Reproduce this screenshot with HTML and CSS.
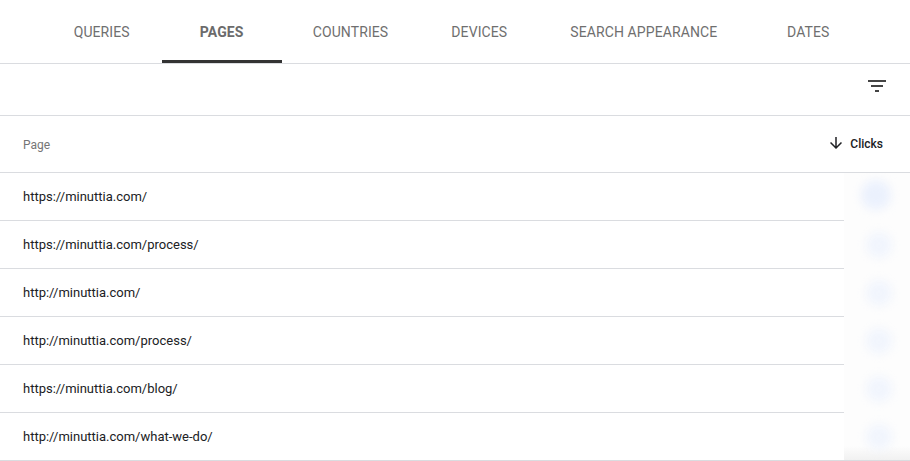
FILE: index.html
```html
<!DOCTYPE html>
<html>
<head>
<meta charset="utf-8">
<link rel="stylesheet" href="styles.css">
</head>
<body>
<div class="tabs">
  <div class="tab">QUERIES</div>
  <div class="tab active">PAGES</div>
  <div class="tab">COUNTRIES</div>
  <div class="tab">DEVICES</div>
  <div class="tab">SEARCH APPEARANCE</div>
  <div class="tab">DATES</div>
</div>
<div class="toolbar">
  <svg class="filter" width="24" height="24" viewBox="0 0 24 24"><path d="M10 18h4v-2h-4v2zM3 6v2h18V6H3zm3 7h12v-2H6v2z" fill="#444"/></svg>
</div>
<div class="table">
  <div class="head">
    <div class="hcell">Page</div>
    <div class="hclicks">
      <svg width="18" height="18" viewBox="0 0 24 24"><path d="M20 12l-1.41-1.41L13 16.17V4h-2v12.17l-5.58-5.59L4 12l8 8 8-8z" fill="#202124"/></svg>
      <span>Clicks</span>
    </div>
  </div>
  <div class="row"><div class="url">https://minuttia.com/</div><div class="clicks"><span class="dot d1"></span></div></div>
  <div class="row"><div class="url">https://minuttia.com/process/</div><div class="clicks"><span class="dot"></span></div></div>
  <div class="row"><div class="url">http://minuttia.com/</div><div class="clicks"><span class="dot"></span></div></div>
  <div class="row"><div class="url">http://minuttia.com/process/</div><div class="clicks"><span class="dot"></span></div></div>
  <div class="row"><div class="url">https://minuttia.com/blog/</div><div class="clicks"><span class="dot"></span></div></div>
  <div class="row last"><div class="url">http://minuttia.com/what-we-do/</div><div class="clicks"><span class="dot"></span></div></div>
</div>
</body>
</html>
```
FILE: styles.css
```css
* { box-sizing: border-box; }
body {
  margin: 0;
  font-family: Roboto, "Liberation Sans", Arial, sans-serif;
  background: #fff;
  color: #202124;
  overflow: hidden;
}
.tabs {
  display: flex;
  justify-content: center;
  height: 64px;
  border-bottom: 1px solid #dadce0;
}
.tab {
  position: relative;
  min-width: 120px;
  padding: 0 31px;
  display: flex;
  align-items: center;
  justify-content: center;
  font-size: 14px;
  color: #6f6f6f;
  letter-spacing: 0.1px;
}
.tab.active {
  font-weight: 700;
  color: #6b6b6b;
}
.tab.active::after {
  content: "";
  position: absolute;
  left: 0;
  right: 0;
  bottom: 0;
  height: 3px;
  background: #333;
}
.toolbar {
  height: 52px;
  border-bottom: 1px solid #dadce0;
  display: flex;
  justify-content: flex-end;
  align-items: flex-start;
  padding: 10px 21px 0 0;
}
.filter { display: block; }
.head {
  height: 57px;
  display: flex;
  align-items: center;
  justify-content: space-between;
  border-bottom: 1px solid #dadce0;
  padding: 0 27px 0 23px;
}
.hcell {
  font-size: 12px;
  color: #757575;
  padding-top: 1px;
}
.hclicks {
  display: flex;
  align-items: center;
  gap: 5px;
  font-size: 12px;
  font-weight: 500;
  color: #202124;
}
.hclicks svg { display: block; margin-top: -3px; }
.row {
  display: flex;
  height: 48px;
}
.url {
  flex: 1;
  display: flex;
  align-items: center;
  padding-left: 23px;
  font-size: 13px;
  color: #202124;
  border-bottom: 1px solid #dadce0;
}
.clicks {
  width: 66px;
  position: relative;
  overflow: hidden;
  background: #fdfdfd;
}
.row.last .clicks {
  background: linear-gradient(#fdfdfd 0, #fdfdfd 70%, #f1f1f1 100%);
  border-bottom: 1px solid #dadce0;
}
.dot {
  position: absolute;
  left: 22px;
  top: 11px;
  width: 26px;
  height: 26px;
  border-radius: 50%;
  background: #f1f5fd;
  filter: blur(5px);
}
.dot.d1 {
  left: 17px;
  top: 7px;
  width: 30px;
  height: 30px;
  background: #ebf1fd;
}
```
